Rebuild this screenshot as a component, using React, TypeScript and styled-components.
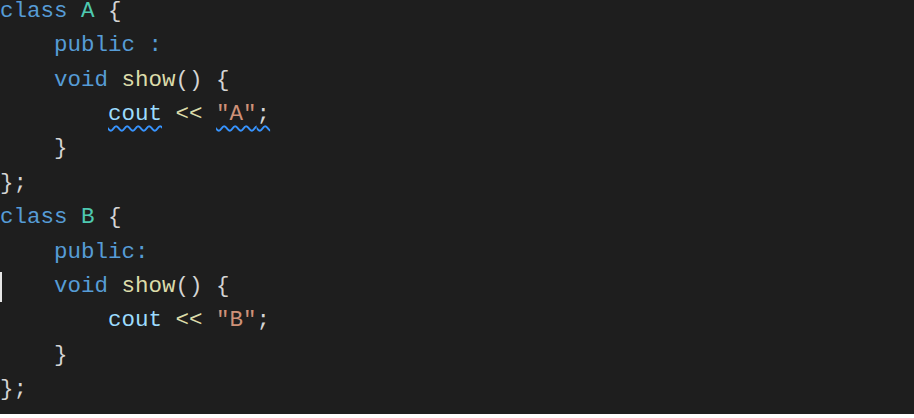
import React from "react";
import styled, { createGlobalStyle } from "styled-components";

const Global = createGlobalStyle`
  html, body { margin: 0; padding: 0; background: #ffffff; }
  #root { width: 914px; }
`;

const Editor = styled.div`
  width: 914px;
  height: 414px;
  background: #1e1e1e;
  overflow: hidden;
  font-family: "Liberation Mono", "Courier New", monospace;
  font-size: 22.5px;
  color: #d4d4d4;
`;

const Lines = styled.div`
  margin-top: -6px;
  display: flex;
  flex-direction: column;
`;

const Line = styled.div<{ $indent: number }>`
  position: relative;
  height: 34.36px;
  line-height: 34.36px;
  white-space: pre;
  padding-left: ${(p) => p.$indent * 13.5}px;
`;

const Cursor = styled.span`
  position: absolute;
  left: 0;
  top: 3px;
  width: 2px;
  height: 30px;
  background: #e6e6e6;
`;

type Kind = "kw" | "type" | "fn" | "var" | "str" | "punc";
const colors: Record<Kind, string> = {
  kw: "#569cd6",
  type: "#4ec9b0",
  fn: "#dcdcaa",
  var: "#9cdcfe",
  str: "#ce9178",
  punc: "#d4d4d4",
};

const Tok = styled.span<{ $k: Kind; $squiggle?: boolean }>`
  color: ${(p) => colors[p.$k]};
  ${(p) =>
    p.$squiggle
      ? `text-decoration: underline wavy #3794ff;
         text-decoration-thickness: 1.5px;
         text-underline-offset: 5px;
         text-decoration-skip-ink: none;`
      : ""}
`;

export default function App() {
  return (
    <>
      <Global />
      <Editor>
        <Lines>
          <Line $indent={0}>
            <Tok $k="kw">class</Tok> <Tok $k="type">A</Tok> <Tok $k="punc">{"{"}</Tok>
          </Line>
          <Line $indent={4}>
            <Tok $k="kw">public</Tok> <Tok $k="kw">:</Tok>
          </Line>
          <Line $indent={4}>
            <Tok $k="kw">void</Tok> <Tok $k="fn">show</Tok>
            <Tok $k="punc">() {"{"}</Tok>
          </Line>
          <Line $indent={8}>
            <Tok $k="var" $squiggle>cout</Tok> <Tok $k="fn">{"<<"}</Tok>{" "}
            <Tok $k="str" $squiggle>
              "A"<Tok $k="punc">;</Tok>
            </Tok>
          </Line>
          <Line $indent={4}>
            <Tok $k="punc">{"}"}</Tok>
          </Line>
          <Line $indent={0}>
            <Tok $k="punc">{"};"}</Tok>
          </Line>
          <Line $indent={0}>
            <Tok $k="kw">class</Tok> <Tok $k="type">B</Tok> <Tok $k="punc">{"{"}</Tok>
          </Line>
          <Line $indent={4}>
            <Tok $k="kw">public:</Tok>
          </Line>
          <Line $indent={4}>
            <Cursor />
            <Tok $k="kw">void</Tok> <Tok $k="fn">show</Tok>
            <Tok $k="punc">() {"{"}</Tok>
          </Line>
          <Line $indent={8}>
            <Tok $k="var">cout</Tok> <Tok $k="fn">{"<<"}</Tok> <Tok $k="str">"B"</Tok>
            <Tok $k="punc">;</Tok>
          </Line>
          <Line $indent={4}>
            <Tok $k="punc">{"}"}</Tok>
          </Line>
          <Line $indent={0}>
            <Tok $k="punc">{"};"}</Tok>
          </Line>
        </Lines>
      </Editor>
    </>
  );
}
